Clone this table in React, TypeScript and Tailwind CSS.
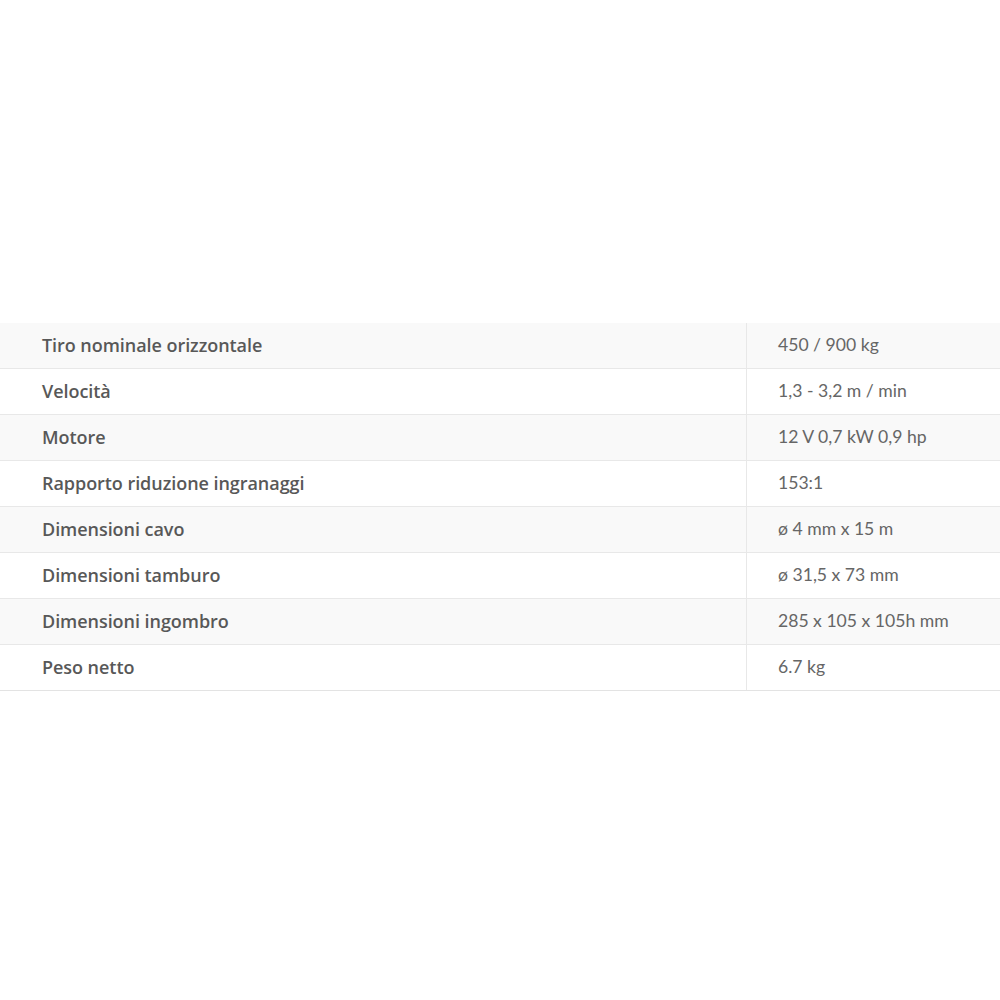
import React from 'react';

const rows: [string, string][] = [
  ['Tiro nominale orizzontale', '450 / 900 kg'],
  ['Velocità', '1,3 - 3,2 m / min'],
  ['Motore', '12 V 0,7 kW 0,9 hp'],
  ['Rapporto riduzione ingranaggi', '153:1'],
  ['Dimensioni cavo', 'ø 4 mm x 15 m'],
  ['Dimensioni tamburo', 'ø 31,5 x 73 mm'],
  ['Dimensioni ingombro', '285 x 105 x 105h mm'],
  ['Peso netto', '6.7 kg'],
];

export default function App() {
  return (
    <div className="w-[1000px] h-[1000px] bg-white pt-[323px]">
      {rows.map(([label, value], i) => (
        <div
          key={label}
          className={`flex h-[46px] border-b ${i === rows.length - 1 ? 'border-[#e3e3e3]' : 'border-[#e8e8e8]'} ${i % 2 === 0 ? 'bg-[#f9f9f9]' : 'bg-white'}`}
        >
          <div className="w-[747px] flex items-center pl-[42px] text-[18px] tracking-[-0.05px] font-semibold text-[#585858] border-r border-[#e8e8e8] font-['Open_Sans','Noto_Sans',sans-serif]">
            {label}
          </div>
          <div className="flex-1 flex items-center pl-[31px] text-[17.6px] text-[#666666] font-['Lato','Noto_Sans',sans-serif]">
            {value}
          </div>
        </div>
      ))}
    </div>
  );
}
